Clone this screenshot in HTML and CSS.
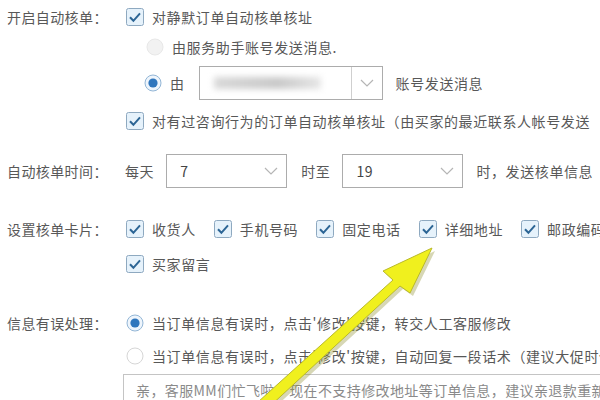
FILE: index.html
```html
<!DOCTYPE html>
<html lang="zh-CN">

<head>
    <meta charset="UTF-8">
    <title>自动核单设置</title>
    <link rel="stylesheet" href="styles.css">
</head>

<body>
    <div class="page">
        <!-- 开启自动核单 -->
        <div class="section sec-auto">
            <div class="label">开启自动核单：</div>
            <div class="options">
                <div class="opt">
                    <svg class="box" width="18" height="18" viewBox="0 0 18 18"><rect x="0.5" y="0.5" width="17" height="17" rx="2" fill="#e6f2fb" stroke="#8ea9c0"/><path d="M4 9.3 L7.4 12.8 L14 5.4" fill="none" stroke="#2c6595" stroke-width="2"/></svg>
                    <span>对静默订单自动核单核址</span>
                </div>
                <div class="opt indent">
                    <svg class="box" width="18" height="18" viewBox="0 0 18 18"><circle cx="9" cy="9" r="8" fill="#f2f2f2" stroke="#e8e8e8"/></svg>
                    <span>由服务助手账号发送消息.</span>
                </div>
                <div class="opt indent-s opt-select">
                    <svg class="box" width="18" height="18" viewBox="0 0 18 18"><circle cx="9" cy="9" r="8" fill="#eef5fc" stroke="#93b6d6"/><circle cx="9" cy="9" r="4.6" fill="#2f76bd"/></svg>
                    <span>由</span>
                    <div class="select wide">
                        <div class="blur"></div>
                        <div class="drop divided">
                            <svg width="14" height="8" viewBox="0 0 14 8"><path d="M1 1 L7 7 L13 1" fill="none" stroke="#b5b5b5" stroke-width="1.2"/></svg>
                        </div>
                    </div>
                    <span class="after">账号发送消息</span>
                </div>
                <div class="opt opt-last">
                    <svg class="box" width="18" height="18" viewBox="0 0 18 18"><rect x="0.5" y="0.5" width="17" height="17" rx="2" fill="#e6f2fb" stroke="#8ea9c0"/><path d="M4 9.3 L7.4 12.8 L14 5.4" fill="none" stroke="#2c6595" stroke-width="2"/></svg>
                    <span>对有过咨询行为的订单自动核单核址（由买家的最近联系人帐号发送</span>
                </div>
            </div>
        </div>

        <!-- 自动核单时间 -->
        <div class="section sec-time">
            <div class="label">自动核单时间：</div>
            <div class="options">
                <div class="opt opt-select">
                    <span>每天</span>
                    <div class="select small">
                        <span class="value">7</span>
                        <div class="drop">
                            <svg width="14" height="8" viewBox="0 0 14 8"><path d="M1 1 L7 7 L13 1" fill="none" stroke="#b5b5b5" stroke-width="1.2"/></svg>
                        </div>
                    </div>
                    <span class="between">时至</span>
                    <div class="select small">
                        <span class="value">19</span>
                        <div class="drop">
                            <svg width="14" height="8" viewBox="0 0 14 8"><path d="M1 1 L7 7 L13 1" fill="none" stroke="#b5b5b5" stroke-width="1.2"/></svg>
                        </div>
                    </div>
                    <span class="after">时，发送核单信息</span>
                </div>
            </div>
        </div>

        <!-- 设置核单卡片 -->
        <div class="section sec-card">
            <div class="label">设置核单卡片：</div>
            <div class="options">
                <div class="opt">
                    <div class="item">
                        <svg class="box" width="18" height="18" viewBox="0 0 18 18"><rect x="0.5" y="0.5" width="17" height="17" rx="2" fill="#e6f2fb" stroke="#8ea9c0"/><path d="M4 9.3 L7.4 12.8 L14 5.4" fill="none" stroke="#2c6595" stroke-width="2"/></svg>
                        <span>收货人</span>
                    </div>
                    <div class="item">
                        <svg class="box" width="18" height="18" viewBox="0 0 18 18"><rect x="0.5" y="0.5" width="17" height="17" rx="2" fill="#e6f2fb" stroke="#8ea9c0"/><path d="M4 9.3 L7.4 12.8 L14 5.4" fill="none" stroke="#2c6595" stroke-width="2"/></svg>
                        <span>手机号码</span>
                    </div>
                    <div class="item">
                        <svg class="box" width="18" height="18" viewBox="0 0 18 18"><rect x="0.5" y="0.5" width="17" height="17" rx="2" fill="#e6f2fb" stroke="#8ea9c0"/><path d="M4 9.3 L7.4 12.8 L14 5.4" fill="none" stroke="#2c6595" stroke-width="2"/></svg>
                        <span>固定电话</span>
                    </div>
                    <div class="item">
                        <svg class="box" width="18" height="18" viewBox="0 0 18 18"><rect x="0.5" y="0.5" width="17" height="17" rx="2" fill="#e6f2fb" stroke="#8ea9c0"/><path d="M4 9.3 L7.4 12.8 L14 5.4" fill="none" stroke="#2c6595" stroke-width="2"/></svg>
                        <span>详细地址</span>
                    </div>
                    <div class="item">
                        <svg class="box" width="18" height="18" viewBox="0 0 18 18"><rect x="0.5" y="0.5" width="17" height="17" rx="2" fill="#e6f2fb" stroke="#8ea9c0"/><path d="M4 9.3 L7.4 12.8 L14 5.4" fill="none" stroke="#2c6595" stroke-width="2"/></svg>
                        <span>邮政编码</span>
                    </div>
                </div>
                <div class="opt opt-gap">
                    <div class="item">
                        <svg class="box" width="18" height="18" viewBox="0 0 18 18"><rect x="0.5" y="0.5" width="17" height="17" rx="2" fill="#e6f2fb" stroke="#8ea9c0"/><path d="M4 9.3 L7.4 12.8 L14 5.4" fill="none" stroke="#2c6595" stroke-width="2"/></svg>
                        <span>买家留言</span>
                    </div>
                </div>
            </div>
        </div>

        <!-- 信息有误处理 -->
        <div class="section sec-error">
            <div class="label">信息有误处理：</div>
            <div class="options">
                <div class="opt">
                    <svg class="box" width="18" height="18" viewBox="0 0 18 18"><circle cx="9" cy="9" r="8" fill="#eef5fc" stroke="#93b6d6"/><circle cx="9" cy="9" r="4.6" fill="#2f76bd"/></svg>
                    <span>当订单信息有误时，点击'修改'按键，转交人工客服修改</span>
                </div>
                <div class="opt opt-tight">
                    <svg class="box" width="18" height="18" viewBox="0 0 18 18"><circle cx="9" cy="9" r="8" fill="#fff" stroke="#d6d6d6"/></svg>
                    <span>当订单信息有误时，点击'修改'按键，自动回复一段话术（建议大促时使用）</span>
                </div>
                <div class="reply">亲，客服MM们忙飞啦！现在不支持修改地址等订单信息，建议亲退款重新拍下</div>
            </div>
        </div>
    </div>

    <svg class="arrow" width="600" height="400" viewBox="0 0 600 400">
        <polygon points="435,251 386,274 396,283 261,405 271,411 403,289 413,296" fill="#8c8c2a" opacity="0.35"/>
        <polygon points="432,248 383,271 393,280 258,402 268,408 400,286 410,293" fill="#f0f01e" stroke="#b9b92a" stroke-width="1"/>
    </svg>
</body>

</html>
```

FILE: styles.css
```css
body {
    margin: 0;
    overflow: hidden;
    background: #fff;
    font-family: "Noto Sans CJK SC", "Noto Sans", sans-serif;
    font-size: 14px;
    color: #585858;
}

.page {
    padding: 2px 0 0 7px;
    white-space: nowrap;
}

.section {
    display: flex;
    align-items: flex-start;
}

.label {
    width: 118px;
    flex-shrink: 0;
    height: 30px;
    line-height: 30px;
    letter-spacing: 0.4px;
}

.options {
    display: flex;
    flex-direction: column;
}

.opt {
    display: flex;
    align-items: center;
    height: 30px;
    letter-spacing: 0.6px;
}

.box {
    flex-shrink: 0;
    margin-left: 1px;
    margin-right: 8px;
}

.indent {
    padding-left: 20px;
}

.indent-s {
    padding-left: 18px;
}

.opt-select {
    height: 36px;
    margin-top: 3px;
}

.opt-last {
    margin-top: 5px;
}

/* 下拉框 */
.select {
    display: flex;
    align-items: center;
    height: 34px;
    border: 1px solid #acacac;
    box-sizing: border-box;
    background: #fff;
    margin-left: 14px;
}

.select.wide {
    width: 184px;
}

.select.small {
    width: 121px;
    height: 34px;
    margin-left: 12px;
}

.select .value {
    flex: 1;
    padding-left: 13px;
    color: #444;
}

.select .blur {
    flex: 1;
    height: 12px;
    margin: 0 30px 0 14px;
    background: linear-gradient(90deg, #d8d8d8, #c8c8c8 60%, #e6e6e6);
    filter: blur(3px);
}

.drop {
    width: 30px;
    height: 100%;
    display: flex;
    align-items: center;
    justify-content: center;
}

.drop.divided {
    border-left: 1px solid #cfcfcf;
}

.after {
    margin-left: 13px;
}

.between {
    margin-left: 14px;
}

.sec-time {
    margin-top: 17px;
}

.sec-time .label {
    height: 36px;
    line-height: 36px;
}

.sec-time .opt-select {
    margin-top: 0;
}

.sec-card {
    margin-top: 25px;
}

.item {
    display: flex;
    align-items: center;
    margin-right: 17px;
}

.opt-gap {
    margin-top: 5px;
}

.sec-error {
    margin-top: 29px;
}

.opt-tight {
    margin-top: 3px;
}

.reply {
    margin-top: 3px;
    margin-left: -2px;
    width: 520px;
    height: 30px;
    line-height: 30px;
    border: 1px solid #c4c4c4;
    padding-left: 12px;
    color: #8a8a8a;
    letter-spacing: 0.4px;
}

/* 标注箭头 */
.arrow {
    position: absolute;
    top: 0;
    left: 0;
    pointer-events: none;
}
```
